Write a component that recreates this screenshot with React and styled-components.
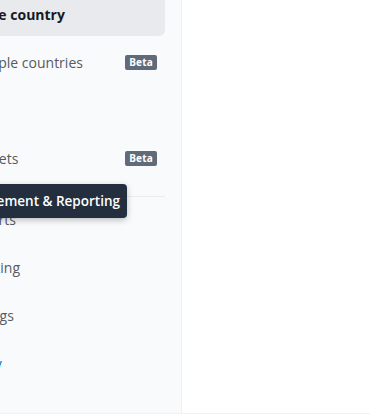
import React from "react";
import styled, { createGlobalStyle } from "styled-components";

const Global = createGlobalStyle`
  html, body { margin: 0; padding: 0; background: #ffffff; }
  body { overflow: hidden; font-family: "Open Sans", "Noto Sans", sans-serif; }
  #root { width: 370px; height: 414px; overflow: hidden; }
`;

const Page = styled.div`
  display: flex;
  width: 370px;
  height: 413px;
  overflow: hidden;
  border-bottom: 1px solid #f1f2f4;
`;

const Sidebar = styled.aside`
  flex: 0 0 242px;
  margin-left: -60px;
  background: #f9fafb;
  border-right: 1px solid #f0f1f3;
  box-sizing: border-box;
  position: relative;
`;

const Nav = styled.nav`
  display: flex;
  flex-direction: column;
  margin-top: -8px;
  padding: 0 16px 0 12px;
`;

const Item = styled.div`
  position: relative;
  display: flex;
  align-items: center;
  justify-content: space-between;
  height: 44px;
  margin-bottom: 4px;
  padding: 0 8px 0 13px;
  border-radius: 6px;
  background: ${(p) => (p.$active ? "#e8eaed" : "transparent")};
  color: ${(p) => (p.$active ? "#16191f" : p.$link ? "#0972d3" : "#545b64")};
  font-size: 14px;
  font-weight: ${(p) => (p.$active ? 700 : 400)};
  white-space: nowrap;
`;

const Badge = styled.span`
  display: inline-flex;
  align-items: center;
  height: 15px;
  padding: 0 4px;
  border-radius: 2px;
  background: #5f6b7a;
  color: #ffffff;
  font-size: 10px;
  font-weight: 700;
  letter-spacing: 0.2px;
`;

const Divider = styled.hr`
  margin: 12px 0 0;
  border: 0;
  border-top: 1px solid #e9ebed;
`;

const Tooltip = styled.div`
  position: absolute;
  right: 38px;
  bottom: 23px;
  padding: 0 7px;
  height: 34px;
  display: flex;
  align-items: center;
  background: #232f3e;
  color: #ffffff;
  font-size: 13.5px;
  font-weight: 600;
  border-radius: 4px;
  box-shadow: 0 2px 6px rgba(0, 0, 0, 0.25);
  white-space: nowrap;
  z-index: 5;
`;

const Main = styled.main`
  flex: 1;
  background: #ffffff;
`;

export default function App() {
  return (
    <>
      <Global />
      <Page>
        <Sidebar>
          <Nav>
            <Item $active>Single country</Item>
            <Item>
              Multiple countries <Badge>Beta</Badge>
            </Item>
            <Item $link>Links</Item>
            <Item>
              Budgets <Badge>Beta</Badge>
            </Item>
            <Divider />
            <Item>
              Reports
              <Tooltip>Measurement &amp; Reporting</Tooltip>
            </Item>
            <Item>Tracking</Item>
            <Item>Listings</Item>
            <Item $link>Study</Item>
          </Nav>
        </Sidebar>
        <Main />
      </Page>
    </>
  );
}
